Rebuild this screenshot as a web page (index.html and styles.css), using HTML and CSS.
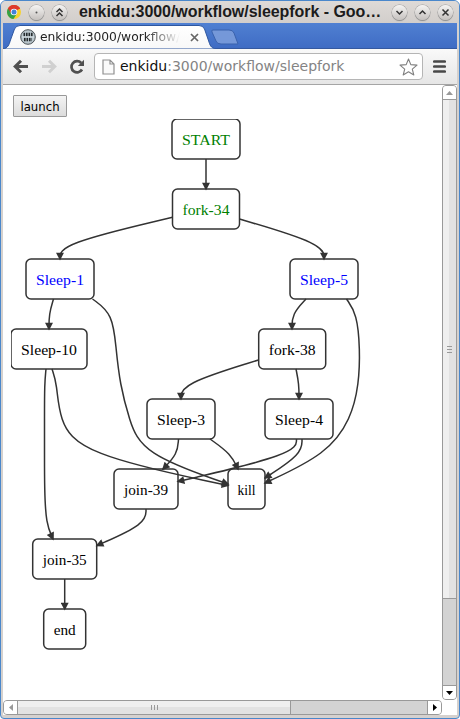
FILE: index.html
```html
<!DOCTYPE html>
<html lang="en">
<head>
<meta charset="utf-8">
<title>enkidu:3000/workflow/sleepfork</title>
<link rel="stylesheet" href="styles.css">
</head>
<body>
<div class="window">
  <header class="titlebar">
    <svg class="chrome" width="14" height="14" viewBox="-7 -7 14 14">
      <circle r="7" fill="#f7d22c"/>
      <path d="M0 0 L-6.06 -3.5 A7 7 0 0 1 6.06 -3.5 Z" fill="#dd3a2c"/>
      <path d="M0 0 L-6.06 -3.5 A7 7 0 0 0 -0.5 7 L3 1.5 Z" fill="#35a048"/>
      <path d="M0 -3.2 H6.2 A7 7 0 0 0 -6 -3.6 L-2.8 1.6 Z" fill="#dd3a2c"/>
      <circle r="3.3" fill="#fff"/><circle r="2.5" fill="#4382d8"/>
    </svg>
    <span class="knob"><svg width="15" height="15" viewBox="0 0 15 15"><circle cx="7.5" cy="7.5" r="1" fill="#555"/></svg></span>
    <span class="knob"><svg width="15" height="15" viewBox="0 0 15 15"><path d="M4.5 7 L7.5 4 L10.5 7 M4.5 11 L7.5 8 L10.5 11"/></svg></span>
    <h1 class="title">enkidu:3000/workflow/sleepfork - Goo…</h1>
    <span class="knob"><svg width="15" height="15" viewBox="0 0 15 15"><path d="M4.5 6 L7.5 9 L10.5 6"/></svg></span>
    <span class="knob"><svg width="15" height="15" viewBox="0 0 15 15"><path d="M4.5 9 L7.5 6 L10.5 9"/></svg></span>
    <span class="knob"><svg width="15" height="15" viewBox="0 0 15 15"><path d="M4.5 4.5 L10.5 10.5 M10.5 4.5 L4.5 10.5"/></svg></span>
  </header>

  <nav class="tabs">
    <svg class="tab-shape" width="250" height="26" viewBox="0 0 250 26">
      <defs><linearGradient id="tabfill" x1="0" y1="0" x2="0" y2="1"><stop offset="0" stop-color="#fff"/><stop offset="1" stop-color="#f8f8f8"/></linearGradient></defs>
      <path d="M0 26 C5 25 6 22 7.5 17 L11.5 6 Q13 2.5 17 2.5 H196 Q200 2.5 201.5 6 L206 19 C207.5 24 209 25 213 26 Z" fill="url(#tabfill)" stroke="#2f579f"/>
      <path d="M210 7 H226 Q230 7 231 10 L235 21 H218 Q214 21 213 18 L209 9 Q208 7 210 7 Z" fill="#7598d9" stroke="#3a62ad"/>
    </svg>
    <div class="tab">
      <svg class="favicon" width="16" height="16" viewBox="0 0 16 16">
        <circle cx="8" cy="8" r="7.3" fill="#b9c5cb" stroke="#4c5357"/>
        <path d="M3.5 5.5 H12.8 M4 10.5 H12" stroke="#252a2d" stroke-width="3.6" stroke-dasharray="1.6 .9"/>
        <path d="M2 8 H14" stroke="#dce6ea"/>
      </svg>
      <span class="tab-label">enkidu:3000/workflow/</span>
      <svg class="close" width="9" height="9" viewBox="0 0 9 9"><path d="M1 1 L8 8 M8 1 L1 8" stroke="#666" stroke-width="1.7"/></svg>
    </div>
  </nav>

  <div class="toolbar">
    <svg width="16" height="16" viewBox="0 0 16 16"><path d="M15 7.5 H3 M8 1.8 L2.2 7.5 L8 13.2" fill="none" stroke="#505050" stroke-width="3"/></svg>
    <svg class="fwd" width="16" height="16" viewBox="0 0 16 16"><path d="M1 7.5 H13 M8 1.8 L13.8 7.5 L8 13.2" fill="none" stroke="#d0d0d0" stroke-width="3"/></svg>
    <svg class="reload" width="16" height="16" viewBox="0 0 16 16"><path d="M12.2 4 A5.6 5.6 0 1 0 13 10.5" fill="none" stroke="#505050" stroke-width="2.7"/><path d="M15 .8 V7 H8.8 Z" fill="#505050"/></svg>
    <div class="omnibox">
      <svg width="13" height="16" viewBox="0 0 13 16"><path d="M1 1 H8 L12 5 V15 H1 Z M8 1 V5 H12" fill="#fafafa" stroke="#909090" stroke-width="1.2"/></svg>
      <span class="url">enkidu<span class="url-dim">:3000/workflow/sleepfork</span></span>
      <svg class="star" width="19" height="18" viewBox="0 0 19 18"><path d="M9.5 1 L11.8 6.6 L18 7.1 L13.3 11.1 L14.8 17 L9.5 13.8 L4.2 17 L5.7 11.1 L1 7.1 L7.2 6.6 Z" fill="#fff" stroke="#808080" stroke-width="1.1" stroke-linejoin="round"/></svg>
    </div>
    <svg class="menu" width="13" height="13" viewBox="0 0 13 13"><path d="M1.3 1.5 H11.7 M1.3 6.5 H11.7 M1.3 11.5 H11.7" stroke="#484848" stroke-width="2.7" stroke-linecap="round"/></svg>
  </div>

  <div class="viewport">
    <main class="page">
      <button class="launch">launch</button>
      <svg class="graph" width="430" height="560" viewBox="11 119 430 560">
        <defs><marker id="arrow" viewBox="0 0 10 10" refX="8" refY="5" markerUnits="strokeWidth" markerWidth="8" markerHeight="5.3" orient="auto"><path d="M0 0 L10 5 L0 10 Z" fill="#333"/></marker></defs>
        <g id="nodes"></g>
        <g id="edges"></g>
      </svg>
    </main>
    <div class="vbar">
      <span class="cap cap-top"><svg width="7" height="4"><path d="M0 4 L3.5 0 L7 4 Z" fill="#999"/></svg></span>
      <span class="vthumb"><i class="grip"></i></span>
      <span class="vtrack"></span>
      <span class="cap cap-bottom"><svg width="7" height="4"><path d="M0 0 L3.5 4 L7 0 Z"/></svg></span>
    </div>
    <div class="hbar">
      <span class="cap cap-left"><svg width="4" height="7"><path d="M4 0 L0 3.5 L4 7 Z" fill="#999"/></svg></span>
      <span class="hthumb"><i class="grip grip-h"></i></span>
      <span class="htrack"></span>
      <span class="cap cap-right"><svg width="4" height="7"><path d="M0 0 L4 3.5 L0 7 Z"/></svg></span>
    </div>
    <div class="corner"></div>
  </div>
</div>
<script src="graph.js"></script>
</body>
</html>
```
FILE: styles.css
```css
* { box-sizing: border-box; }
body { margin: 0; background: #fff; }
.window {
  display: flex; flex-direction: column;
  width: 460px; height: 719px;
  padding: 0 2px 3px;
  background: #d5d1ce;
  border: 1px solid #4a87cb;
  border-radius: 6px 6px 4px 4px;
  overflow: hidden;
}
.titlebar {
  display: flex; align-items: center; gap: 8px;
  flex: none; height: 22px; margin: 0 -2px; padding: 0 6px;
  background: linear-gradient(#dedad7, #d2cecb);
}
.chrome { flex: none; }
.knob {
  flex: none; width: 15px; height: 15px; border-radius: 50%;
  background: linear-gradient(#f5f4f3, #c5c1be);
  box-shadow: 0 0 0 .5px #999, 0 1px 1px #888;
}
.knob svg { display: block; }
.knob path { fill: none; stroke: #333; stroke-width: 1.5; }
.title {
  flex: 1; min-width: 0; margin: 0 0 0 4px;
  font: bold 16px/22px "Liberation Sans", sans-serif;
  letter-spacing: -.05px;
  color: #1c1c1c; white-space: nowrap;
}
.tabs {
  position: relative; flex: none; height: 26px;
  background: linear-gradient(#5080d2, #3f6cc4);
  border-bottom: 1px solid #35599f;
}
.tab-shape { position: absolute; left: 0; top: 0; }
.tab { position: relative; display: flex; align-items: center; height: 26px; padding: 2px 0 0 17px; }
.tab-label {
  width: 140px; margin: 0 10px 0 4px; overflow: hidden; white-space: nowrap;
  font: 12.3px/20px "DejaVu Sans", sans-serif;
  color: #222;
  -webkit-mask-image: linear-gradient(90deg, #000 75%, transparent);
}
.toolbar {
  display: flex; align-items: center; flex: none; height: 36px; padding: 0 11px 0 10px;
  background: linear-gradient(#f9f9f9, #e6e6e6);
  border-bottom: 1px solid #a5a5a5;
}
.fwd { margin-left: 12px; }
.reload { margin-left: 12px; }
.omnibox {
  display: flex; align-items: center; flex: 1; height: 27px; margin: 0 10px 0 9px; padding: 0 4px 0 7px;
  background: #fff; border: 1px solid #b5b5b5; border-radius: 4px;
}
.url {
  flex: 1; min-width: 0; margin: -2px 0 0 5px; white-space: nowrap; color: #111;
  font: 14px/22px "DejaVu Sans", sans-serif;
}
.url-dim { color: #848484; }
.viewport { flex: 1; display: grid; grid-template: 1fr 15px / 1fr 15px; min-height: 0; background: #fff; }
.page { overflow: hidden; padding: 10px 0 0 8px; }
.launch {
  display: block; width: 54px; height: 22px; margin: 0 0 2px 2px; padding: 1px 0 0;
  font: 13px/19px "DejaVu Sans Condensed", "DejaVu Sans", sans-serif; font-stretch: condensed;
  color: #000; background: linear-gradient(#f4f4f4, #dcdcdc);
  border: 1px solid #999; border-radius: 1px;
}
.graph { display: block; }
.graph rect { fill: #fff; stroke: #333; stroke-width: 1.5; }
.graph text { font: 15.5px "Liberation Serif", serif; text-anchor: middle; }
.edge { fill: none; stroke: #333; stroke-width: 1.5; marker-end: url(#arrow); }
.done { fill: green; }
.running { fill: blue; }
.waiting { fill: #000; }
.vbar, .hbar { display: flex; border: 1px solid #999; background: #d3d3d3; }
.vbar { flex-direction: column; border-radius: 4px; }
.hbar { border-radius: 4px; }
.cap { display: flex; align-items: center; justify-content: center; flex: none; background: #fff; }
.cap-top { height: 14px; border-bottom: 1px solid #999; border-radius: 3px 3px 0 0; }
.cap-bottom { height: 14px; border-top: 1px solid #999; border-radius: 0 0 3px 3px; }
.cap-left { width: 14px; border-right: 1px solid #999; border-radius: 3px 0 0 3px; }
.cap-right { width: 14px; border-left: 1px solid #999; border-radius: 0 3px 3px 0; }
.vthumb, .hthumb { display: flex; align-items: center; justify-content: center; flex: none; }
.vthumb { height: 499px; background: linear-gradient(90deg, #efefef 50%, #e2e2e2 50%); border-bottom: 1px solid #999; }
.hthumb { width: 273px; background: linear-gradient(#efefef 50%, #e2e2e2 50%); border-right: 1px solid #999; }
.vtrack, .htrack { flex: 1; }
.grip { width: 5px; height: 7px; background: repeating-linear-gradient(#999 0 1px, transparent 1px 3px); }
.grip-h { width: 7px; height: 5px; background: repeating-linear-gradient(90deg, #999 0 1px, transparent 1px 3px); }
.corner { background: #fff; }
```
FILE: graph.js
```javascript
// [label, left, top, width, text width, state]
const nodes = [
  ["START", 172, 119, 68, 48, "done"],
  ["fork-34", 172.5, 189, 67, 47, "done"],
  ["Sleep-1", 26, 259, 68, 48, "running"],
  ["Sleep-5", 290, 259, 68, 48, "running"],
  ["Sleep-10", 11, 329, 76, 56, "waiting"],
  ["fork-38", 258.7, 329, 67, 47, "waiting"],
  ["Sleep-3", 147, 399, 68, 48, "waiting"],
  ["Sleep-4", 265, 399, 68, 48, "waiting"],
  ["join-39", 114, 469, 64, 44, "waiting"],
  ["kill", 228, 469, 37, 18, "waiting"],
  ["join-35", 32.7, 539, 64, 44, "waiting"],
  ["end", 43.7, 609, 42, 22, "waiting"]
];

const edges = [
  [[206, 159], [206, 174], [206, 189]],
  [[172.5, 217.3], [60, 244], [60, 259]],
  [[239.5, 219], [324, 244], [324, 259]],
  [[53.5, 299], [49, 314], [49, 329]],
  [[92.5, 299], [113, 314], [116, 349], [120, 384], [129, 419], [142, 454], [228, 484]],
  [[46, 369], [44.5, 384], [44.5, 419], [44.5, 454], [44.5, 489], [46, 524], [53, 539]],
  [[52, 369], [57, 384], [59, 419], [80, 454], [228, 485.5]],
  [[306, 299], [292, 314], [292, 329]],
  [[346.5, 299], [357, 314], [360, 349], [359, 384], [351, 419], [327, 454], [265, 483]],
  [[258.5, 360], [181, 384], [181, 399]],
  [[296, 369], [299, 384], [299, 399]],
  [[178.5, 439], [177.5, 454], [163, 469]],
  [[210, 439], [231, 454], [238, 469]],
  [[296.5, 439], [296, 454], [178, 481.5]],
  [[302, 439], [302, 454], [265, 478]],
  [[146, 509], [146, 524], [97, 545.5]],
  [[64.7, 579], [64.7, 594], [64.7, 609]]
];

const NS = "http://www.w3.org/2000/svg";
function add(parent, tag, attrs, text) {
  const el = document.createElementNS(NS, tag);
  for (const k in attrs) el.setAttribute(k, attrs[k]);
  if (text) el.textContent = text;
  parent.appendChild(el);
}

// Weighted combination of control points.
const mix = (...terms) => [0, 1].map(i => terms.reduce((s, [w, p]) => s + w * p[i], 0).toFixed(2)).join(" ");

// Uniform cubic B-spline with straight end caps.
function spline(p) {
  let d = `M${p[0]} L${mix([5 / 6, p[0]], [1 / 6, p[1]])}`;
  const last = p[p.length - 1];
  for (let i = 1; i < p.length; i++) {
    const next = p[i + 1] || last;
    d += ` C${mix([2 / 3, p[i - 1]], [1 / 3, p[i]])} ${mix([1 / 3, p[i - 1]], [2 / 3, p[i]])} ${mix([1 / 6, p[i - 1]], [2 / 3, p[i]], [1 / 6, next])}`;
  }
  return `${d} L${last}`;
}

for (const [label, x, y, w, tw, state] of nodes) {
  const g = document.getElementById("nodes");
  add(g, "rect", { x, y, width: w, height: 40, rx: 5 });
  add(g, "text", { x: x + w / 2, y: y + 26, class: state, textLength: tw, lengthAdjust: "spacingAndGlyphs" }, label);
}
for (const e of edges) add(document.getElementById("edges"), "path", { class: "edge", d: spline(e) });
```
